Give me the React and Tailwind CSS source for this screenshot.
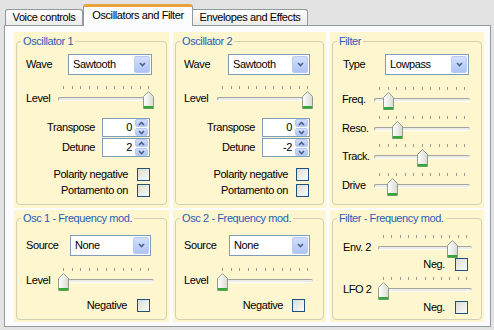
import React from 'react';

const Chevron = ({ up }) => (
  <svg width="7" height="5" viewBox="0 0 7 5">
    <path d={up ? 'M1 4 L3.5 1.5 L6 4' : 'M1 1 L3.5 3.5 L6 1'} fill="none" stroke="#4d6185" strokeWidth="1.6" />
  </svg>
);

const Dropdown = ({ value, className }) => (
  <div className={`flex items-center h-[21px] border border-[#7f9db9] bg-white pl-[4px] ${className}`}>
    <span className="flex-1">{value}</span>
    <div className="flex items-center justify-center w-[16px] h-[17px] mr-px rounded-[2px] border border-[#b9cbf3] bg-linear-to-b from-[#d3e0fd] to-[#aec4f6]">
      <Chevron />
    </div>
  </div>
);

const Spin = ({ value }) => (
  <div className="flex items-center h-[19px] w-[48px] border border-[#7f9db9] bg-white">
    <span className="flex-1 text-right pr-[3px]">{value}</span>
    <div className="flex flex-col gap-px mr-px">
      <div className="flex items-center justify-center w-[13px] h-[8px] rounded-[2px] border border-[#b9cbf3] bg-linear-to-b from-[#d3e0fd] to-[#aec4f6]">
        <Chevron up />
      </div>
      <div className="flex items-center justify-center w-[13px] h-[8px] rounded-[2px] border border-[#b9cbf3] bg-linear-to-b from-[#d3e0fd] to-[#aec4f6]">
        <Chevron />
      </div>
    </div>
  </div>
);

const Check = () => (
  <div className="w-[13px] h-[13px] border border-[#1c5180] bg-linear-to-br from-[#dcdcd6] to-[#fbfbf9]" />
);

// trackbar: 11 ticks, channel, thumb placed from value (0..1)
const Slider = ({ value, width, className }) => {
  const span = width - 11;
  const ticks = Array.from({ length: 11 }, (_, i) => Math.round(5 + (i * span) / 10));
  return (
    <div className={`relative h-[24px] ${className}`}>
      {ticks.map((x) => (
        <div key={x} className="absolute top-[1px] w-px h-[3px] bg-[#9a9a9a]" style={{ left: x }} />
      ))}
      <div className="absolute left-0 right-0 top-[12px] h-[4px] rounded-full border-t border-l border-[#a5a5a0] border-b border-b-white bg-[#ecebe6]" />
      <svg className="absolute top-[6px]" style={{ left: Math.round(value * span) }} width="11" height="18" viewBox="0 0 11 18">
        <defs>
          <linearGradient id="thumb" x1="0" x2="1" y1="0" y2="0">
            <stop offset="0" stopColor="#ffffff" />
            <stop offset="1" stopColor="#dadad2" />
          </linearGradient>
        </defs>
        <path d="M0.5 5.5 L5.5 0.5 L10.5 5.5 V17.5 H0.5 Z" fill="url(#thumb)" stroke="#8a9f8a" />
        <rect x="1" y="15" width="9" height="2.5" fill="#36a636" />
      </svg>
    </div>
  );
};

const GroupBox = ({ title, outer, inner, children }) => (
  <div className={`bg-[#fdf6cf] px-[2px] ${outer}`}>
    <fieldset className={`border border-[#d3d0b8] rounded-[4px] ${inner}`}>
      <legend className="ml-[4px] px-[2px] leading-[13px] text-[#2a5cb8]">{title}</legend>
      {children}
    </fieldset>
  </div>
);

const Row = ({ className, children }) => <div className={`flex items-center ${className}`}>{children}</div>;

export default function App() {
  return (
    <div className="w-[494px] h-[330px] bg-[#e3e3e3] pt-[4px] pl-[4px] font-['Liberation_Sans',Arial,sans-serif] text-[11px] leading-[13px] tracking-[-0.4px] text-black">
      <div className="flex items-end h-[21px] pl-px">
        <div className="flex items-center justify-center w-[78px] h-[16px] border border-b-0 border-[#919b9c] rounded-t-[3px] bg-linear-to-b from-white to-[#ecebe6]">
          Voice controls
        </div>
        <div className="relative z-10 flex items-center justify-center w-[110px] h-[22px] -mb-px border-x border-[#919b9c] border-t-[3px] border-t-[#e8a33d] rounded-t-[3px] bg-[#fcfcfe] pb-[3px]">
          Oscillators and Filter
        </div>
        <div className="flex items-center justify-center w-[115px] h-[16px] border border-b-0 border-l-0 border-[#919b9c] rounded-tr-[3px] bg-linear-to-b from-white to-[#ecebe6]">
          Envelopes and Effects
        </div>
      </div>

      <div className="w-[487px] h-[302px] border border-[#919b9c] bg-[#fcfcfe] pl-[9px] pt-[6px]">
        <div className="flex gap-[4px]">
          <GroupBox title="Oscillator 1" outer="w-[155px] h-[176px] pt-[3px]" inner="h-[170px]">
            <Row className="mt-[6px] pl-[9px]">
              <span className="w-[42px]">Wave</span>
              <Dropdown value="Sawtooth" className="w-[84px]" />
            </Row>
            <div className="flex mt-[10px] pl-[9px]">
              <span className="w-[32px] pt-[7px]">Level</span>
              <Slider value={1} width={96} className="w-[96px]" />
            </div>
            <Row className="justify-end gap-[7px] pr-[16px] mt-[9px]">
              Transpose <Spin value="0" />
            </Row>
            <Row className="justify-end gap-[7px] pr-[16px] mt-[1px]">
              Detune <Spin value="2" />
            </Row>
            <Row className="justify-end gap-[9px] pr-[16px] mt-[11px]">
              Polarity negative <Check />
            </Row>
            <Row className="justify-end gap-[9px] pr-[16px] mt-[3px]">
              Portamento on <Check />
            </Row>
          </GroupBox>

          <GroupBox title="Oscillator 2" outer="w-[153px] h-[176px] pt-[3px]" inner="h-[170px]">
            <Row className="mt-[6px] pl-[8px]">
              <span className="w-[44px]">Wave</span>
              <Dropdown value="Sawtooth" className="w-[82px]" />
            </Row>
            <div className="flex mt-[10px] pl-[8px]">
              <span className="w-[33px] pt-[7px]">Level</span>
              <Slider value={1} width={96} className="w-[96px]" />
            </div>
            <Row className="justify-end gap-[7px] pr-[13px] mt-[9px]">
              Transpose <Spin value="0" />
            </Row>
            <Row className="justify-end gap-[7px] pr-[13px] mt-[1px]">
              Detune <Spin value="-2" />
            </Row>
            <Row className="justify-end gap-[8px] pr-[14px] mt-[11px]">
              Polarity negative <Check />
            </Row>
            <Row className="justify-end gap-[8px] pr-[14px] mt-[3px]">
              Portamento on <Check />
            </Row>
          </GroupBox>

          <GroupBox title="Filter" outer="w-[154px] h-[176px] pt-[3px]" inner="h-[170px]">
            <Row className="mt-[6px] pl-[10px]">
              <span className="w-[42px]">Type</span>
              <Dropdown value="Lowpass" className="w-[84px]" />
            </Row>
            {[
              ['Freq.', 0.1, 'mt-[11px]'],
              ['Reso.', 0.21, 'mt-[5px]'],
              ['Track.', 0.51, 'mt-[4px]'],
              ['Drive', 0.15, 'mt-[5px]'],
            ].map(([label, v, mt]) => (
              <div key={label} className={`flex pl-[9px] ${mt}`}>
                <span className="w-[32px] pt-[7px]">{label}</span>
                <Slider value={v} width={96} className="w-[96px]" />
              </div>
            ))}
          </GroupBox>
        </div>

        <div className="flex gap-[4px] mt-[2px]">
          <GroupBox title="Osc 1 - Frequency mod." outer="w-[155px] h-[112px] pt-[2px]" inner="h-[108px]">
            <Row className="mt-[10px] pl-[9px]">
              <span className="w-[44px]">Source</span>
              <Dropdown value="None" className="w-[81px]" />
            </Row>
            <div className="flex mt-[11px] pl-[9px]">
              <span className="w-[32px] pt-[7px]">Level</span>
              <Slider value={0} width={96} className="w-[96px]" />
            </div>
            <Row className="justify-end gap-[10px] pr-[16px] mt-[8px]">
              Negative <Check />
            </Row>
          </GroupBox>

          <GroupBox title="Osc 2 - Frequency mod." outer="w-[153px] h-[112px] pt-[2px]" inner="h-[108px]">
            <Row className="mt-[10px] pl-[8px]">
              <span className="w-[45px]">Source</span>
              <Dropdown value="None" className="w-[81px]" />
            </Row>
            <div className="flex mt-[11px] pl-[8px]">
              <span className="w-[33px] pt-[7px]">Level</span>
              <Slider value={0} width={96} className="w-[96px]" />
            </div>
            <Row className="justify-end gap-[9px] pr-[18px] mt-[8px]">
              Negative <Check />
            </Row>
          </GroupBox>

          <GroupBox title="Filter - Frequency mod." outer="w-[154px] h-[112px] pt-[2px]" inner="h-[108px]">
            <div className="flex mt-[9px] pl-[10px]">
              <span className="w-[35px] pt-[7px]">Env. 2</span>
              <Slider value={0.83} width={94} className="w-[94px]" />
            </div>
            <Row className="justify-end gap-[10px] pr-[13px]">
              Neg. <Check />
            </Row>
            <div className="flex mt-[5px] pl-[10px]">
              <span className="w-[35px] pt-[7px]">LFO 2</span>
              <Slider value={0} width={94} className="w-[94px]" />
            </div>
            <Row className="justify-end gap-[10px] pr-[13px] mt-[1px]">
              Neg. <Check />
            </Row>
          </GroupBox>
        </div>
      </div>
    </div>
  );
}
